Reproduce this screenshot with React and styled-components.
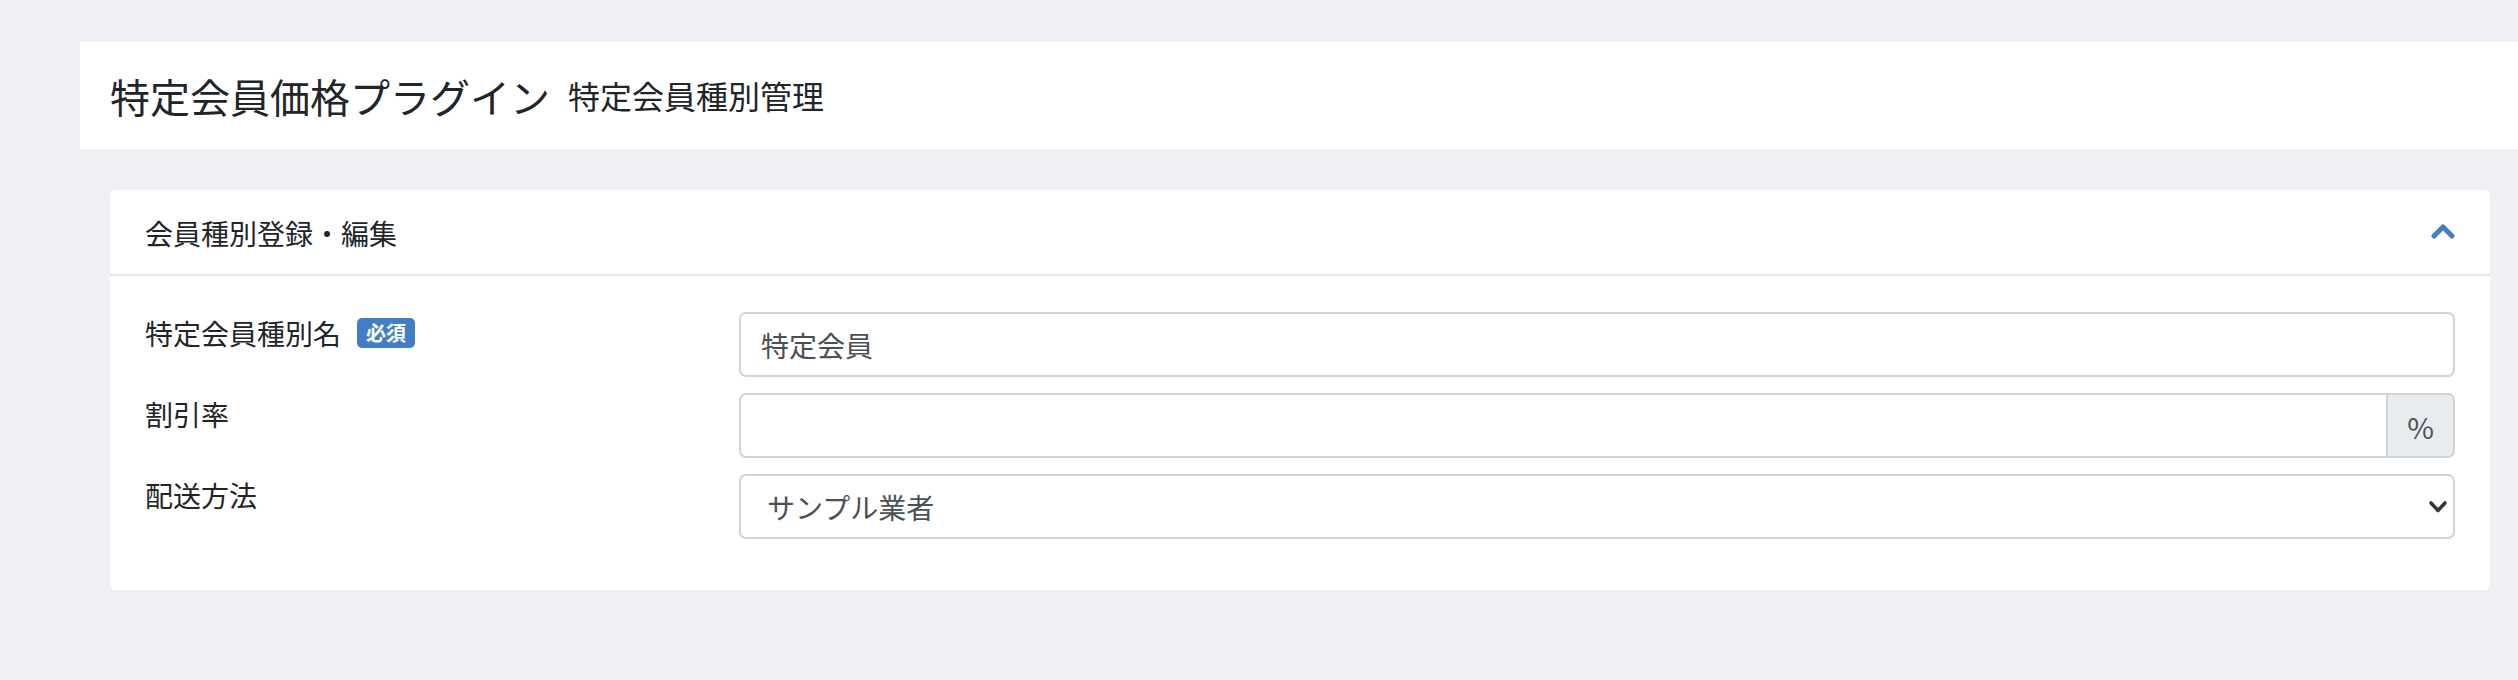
import React from 'react';
import styled, { createGlobalStyle } from 'styled-components';

const FONT = `"Noto Sans CJK JP", "Noto Sans", "Liberation Sans", sans-serif`;

const GlobalStyle = createGlobalStyle`
  html, body {
    margin: 0;
    padding: 0;
    background: #eef0f4;
  }
  body {
    font-family: ${FONT};
    color: #212529;
  }
  * { box-sizing: border-box; }
`;

const Page = styled.div`
  min-height: 680px;
  padding: 42px 0 0 80px;
`;

const Header = styled.div`
  height: 107px;
  background: #fff;
  display: flex;
  align-items: center;
  padding-left: 30px;
`;

const Title = styled.h1`
  margin: 0;
  font-size: 40px;
  font-weight: 400;
  line-height: 1.2;
  color: #212529;
`;

const SubTitle = styled.span`
  margin-left: 18px;
  font-size: 32px;
  line-height: 1.2;
  color: #212529;
`;

const Content = styled.div`
  padding: 41px 28px 0 30px;
`;

const Card = styled.section`
  background: #fff;
  border-radius: 6px;
`;

const CardHeader = styled.div`
  height: 86px;
  display: flex;
  align-items: center;
  justify-content: space-between;
  padding: 0 35px 0 35px;
  border-bottom: 2px solid #e2e4e8;
`;

const CardTitle = styled.div`
  font-size: 28px;
  line-height: 1.5;
  padding-top: 2px;
`;

const Toggle = styled.svg`
  width: 24px;
  height: 17px;
  margin-top: -4px;
  display: block;
`;

const CardBody = styled.div`
  padding: 36px 35px 51px 35px;
  display: flex;
  flex-direction: column;
  gap: 16px;
`;

const FormRow = styled.div`
  display: grid;
  grid-template-columns: 594px 1fr;
  align-items: start;
`;

const Label = styled.div`
  font-size: 28px;
  line-height: 42px;
  display: flex;
  align-items: center;
`;

const Badge = styled.span`
  display: inline-flex;
  align-items: center;
  justify-content: center;
  margin-left: 16px;
  width: 58px;
  height: 30px;
  border-radius: 5px;
  background: #437ec4;
  color: #fff;
  font-size: 20px;
  font-weight: 700;
  line-height: 1;
`;

const TextInput = styled.input`
  display: block;
  width: 100%;
  height: 65px;
  padding: 0 20px;
  border: 2px solid #ced4da;
  border-radius: ${(p) => (p.$joined ? '7px 0 0 7px' : '7px')};
  font-family: ${FONT};
  font-size: 28px;
  color: #495057;
  background: #fff;
  outline: none;
`;

const InputGroup = styled.div`
  display: flex;
  width: 100%;
`;

const Addon = styled.span`
  flex: 0 0 69px;
  height: 65px;
  display: flex;
  align-items: center;
  justify-content: center;
  margin-left: -2px;
  background: #e9ecef;
  border: 2px solid #ced4da;
  border-radius: 0 7px 7px 0;
  font-size: 29px;
  color: #495057;
`;

const SelectWrap = styled.div`
  position: relative;
  width: 100%;
`;

const Select = styled.select`
  display: block;
  width: 100%;
  height: 65px;
  padding: 0 60px 0 26px;
  border: 2px solid #ced4da;
  border-radius: 7px;
  font-family: ${FONT};
  font-size: 28px;
  color: #495057;
  background: #fff;
  appearance: none;
  -webkit-appearance: none;
  outline: none;
`;

const SelectArrow = styled.svg`
  position: absolute;
  right: 8px;
  top: 27px;
  width: 18px;
  height: 12px;
  pointer-events: none;
`;

function App() {
  return (
    <Page>
      <GlobalStyle />
      <Header>
        <Title>特定会員価格プラグイン</Title>
        <SubTitle>特定会員種別管理</SubTitle>
      </Header>

      <Content>
        <Card>
          <CardHeader>
            <CardTitle>会員種別登録・編集</CardTitle>
            <Toggle viewBox="0 0 24 17" aria-hidden="true">
              <polyline
                points="3,14 12,5 21,14"
                fill="none"
                stroke="#437ec4"
                strokeWidth="5"
                strokeLinecap="round"
                strokeLinejoin="round"
              />
            </Toggle>
          </CardHeader>

          <CardBody>
            <FormRow>
              <Label>
                特定会員種別名
                <Badge>必須</Badge>
              </Label>
              <TextInput type="text" defaultValue="特定会員" />
            </FormRow>

            <FormRow>
              <Label>割引率</Label>
              <InputGroup>
                <TextInput type="text" defaultValue="" $joined />
                <Addon>%</Addon>
              </InputGroup>
            </FormRow>

            <FormRow>
              <Label>配送方法</Label>
              <SelectWrap>
                <Select defaultValue="1">
                  <option value="1">サンプル業者</option>
                </Select>
                <SelectArrow viewBox="0 0 18 12" aria-hidden="true">
                  <polyline
                    points="2,2 9,9.5 16,2"
                    fill="none"
                    stroke="#343a40"
                    strokeWidth="3.6"
                    strokeLinecap="round"
                    strokeLinejoin="round"
                  />
                </SelectArrow>
              </SelectWrap>
            </FormRow>
          </CardBody>
        </Card>
      </Content>
    </Page>
  );
}

export default App;
